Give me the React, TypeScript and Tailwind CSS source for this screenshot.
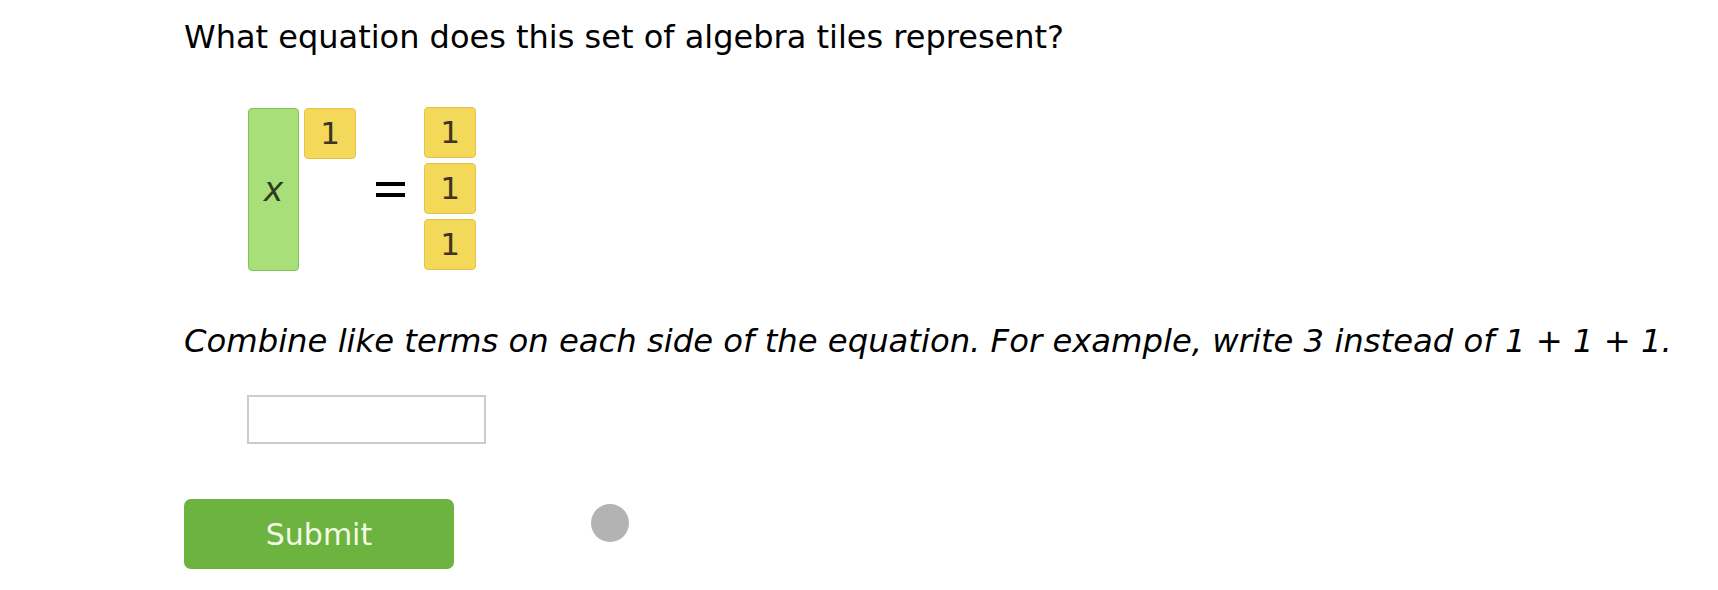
export default function App() {
  const font = { fontFamily: '"DejaVu Sans", Verdana, sans-serif' };
  return (
    <div className="w-[1718px] h-[590px] bg-white text-black" style={font}>
      <div className="pl-[184px] pt-[17px]">
        <p className="text-[32px] leading-[40px]">What equation does this set of algebra tiles represent?</p>

        <div className="mt-[51px] ml-[64px] flex items-start">
          <div className="w-[51px] h-[163px] rounded-[4px] border border-[#7fc35b] bg-[#a8df78] flex items-center justify-center text-[33px] italic text-[#2e3a22]">
            x
          </div>
          <div className="ml-[5px] w-[52px] h-[51px] rounded-[4px] border border-[#e5c247] bg-[#f3d85a] flex items-center justify-center text-[31px] text-[#3a3420]">
            1
          </div>
          <div className="ml-[20px] h-[163px] w-[29px] flex flex-col justify-center gap-[7px]">
            <div className="h-[4px] bg-black" />
            <div className="h-[4px] bg-black" />
          </div>
          <div className="ml-[19px] -mt-[1px] flex flex-col gap-[5px]">
            {[0, 1, 2].map((i) => (
              <div
                key={i}
                className="w-[52px] h-[51px] rounded-[4px] border border-[#e5c247] bg-[#f3d85a] flex items-center justify-center text-[31px] text-[#3a3420]"
              >
                1
              </div>
            ))}
          </div>
        </div>

        <p className="mt-[50px] text-[32.25px] leading-[40px] italic">
          Combine like terms on each side of the equation. For example, write 3 instead of 1 + 1 + 1.
        </p>

        <input
          type="text"
          className="block mt-[34px] ml-[63px] w-[239px] h-[49px] border-2 border-[#cccccc] outline-none"
        />

        <div className="mt-[55px] flex items-start">
          <button className="w-[270px] h-[70px] rounded-[7px] bg-[#6db33f] text-[#f2fae6] text-[30px]">
            Submit
          </button>
          <div className="ml-[137px] mt-[5px] w-[38px] h-[38px] rounded-full bg-[#b3b3b3]" />
        </div>
      </div>
    </div>
  );
}
